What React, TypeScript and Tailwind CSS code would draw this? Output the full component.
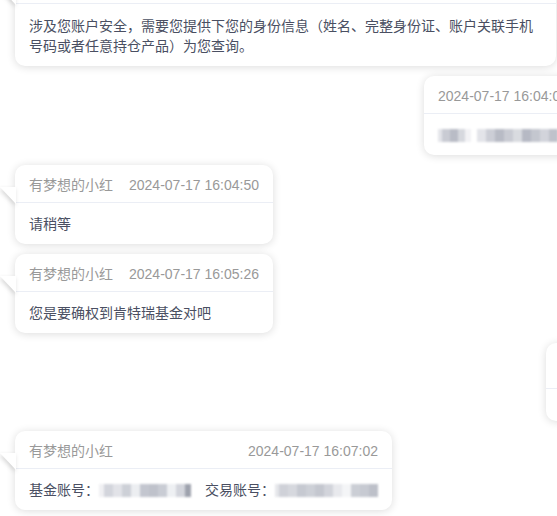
import React from "react";

const FONT = { fontFamily: '"Liberation Sans", "Noto Sans CJK SC", sans-serif' };

function Tail() {
  return (
    <svg
      className="absolute left-[-15px] top-[22px] z-10"
      width="16"
      height="17"
      viewBox="0 0 16 17"
      style={{ filter: "drop-shadow(-1px 2px 2px rgba(0,0,0,0.16))" }}
    >
      <polygon points="0,0 16,0 16,17" fill="#ffffff" />
    </svg>
  );
}

function Mosaic({ cells }: { cells: [number, string][] }) {
  return (
    <span className="inline-flex h-[13px] items-stretch align-middle blur-[0.8px]">
      {cells.map(([w, c], i) => (
        <span key={i} className="block h-full" style={{ width: w, backgroundColor: c }} />
      ))}
    </span>
  );
}

function Bubble({
  children,
  header,
  className,
  tail = true,
  headerClass = "h-[38px]",
}: {
  children: React.ReactNode;
  header?: React.ReactNode;
  className?: string;
  tail?: boolean;
  headerClass?: string;
}) {
  return (
    <div className={"relative shrink-0 rounded-[10px] bg-white shadow-[0_1px_8px_rgba(0,0,0,0.14)] " + (className ?? "")}>
      {tail && <Tail />}
      <div className={"flex items-center border-b border-[#ebeef5] px-[14px] pt-[3px] text-[14px] text-[#999999] " + headerClass}>
        {header}
      </div>
      {children}
    </div>
  );
}

export default function App() {
  return (
    <div className="relative h-[516px] w-[557px] overflow-hidden bg-white" style={FONT}>
      <div className="mt-[-34px] flex flex-col gap-[10px]">
        <Bubble className="ml-[15px] w-[541px]" header={<span>&nbsp;</span>}>
          <div className="px-[14px] pb-[10px] pt-[12px] text-[14px] leading-[20px] text-[#4a4f62]">
            涉及您账户安全，需要您提供下您的身份信息（姓名、完整身份证、账户关联手机号码或者任意持仓产品）为您查询。
          </div>
        </Bubble>

        <Bubble className="ml-[424px] w-[180px]" tail={false} header={<span className="whitespace-nowrap">2024-07-17 16:04:02</span>}>
          <div className="flex h-[41px] items-center px-[14px] pt-[1px]">
            <Mosaic
              cells={[
                [4, "#e4e5ea"],
                [8, "#c9cbd3"],
                [8, "#b9bcc6"],
                [7, "#d6d8de"],
                [6, "#f2f2f5"],
                [6, "#ffffff"],
                [9, "#e3e4e9"],
                [9, "#ccced6"],
                [9, "#b8bbc5"],
                [9, "#c9cbd3"],
                [9, "#d9dbe0"],
                [9, "#b6b9c4"],
                [9, "#c4c7cf"],
                [9, "#d2d4db"],
                [9, "#bfc2cb"],
              ]}
            />
          </div>
        </Bubble>

        <Bubble
          className="ml-[15px] w-[258px]"
          header={
            <>
              <span>有梦想的小红</span>
              <span className="ml-[16px] whitespace-nowrap">2024-07-17 16:04:50</span>
            </>
          }
        >
          <div className="flex h-[41px] items-center px-[14px] pt-[1px] text-[14px] text-[#4a4f62]">请稍等</div>
        </Bubble>

        <Bubble
          className="ml-[15px] w-[258px]"
          header={
            <>
              <span>有梦想的小红</span>
              <span className="ml-[16px] whitespace-nowrap">2024-07-17 16:05:26</span>
            </>
          }
        >
          <div className="flex h-[41px] items-center px-[14px] pt-[1px] text-[14px] text-[#4a4f62]">您是要确权到肯特瑞基金对吧</div>
        </Bubble>

        <Bubble className="ml-[546px] w-[150px]" tail={false} headerClass="h-[46px]" header={<span>&nbsp;</span>}>
          <div className="h-[32px]" />
        </Bubble>

        <Bubble
          className="ml-[15px] w-[377px]"
          header={
            <div className="flex w-full justify-between">
              <span>有梦想的小红</span>
              <span className="whitespace-nowrap">2024-07-17 16:07:02</span>
            </div>
          }
        >
          <div className="flex h-[41px] items-center px-[14px] pt-[1px] text-[14px] text-[#4a4f62]">
            <span>基金账号：</span>
            <Mosaic
              cells={[
                [5, "#f0f0f3"],
                [9, "#d3d5dc"],
                [9, "#e2e3e8"],
                [9, "#cdd0d7"],
                [9, "#eceef1"],
                [9, "#c3c6cf"],
                [9, "#bfc2cb"],
                [9, "#c9ccd4"],
                [9, "#eef0f3"],
                [9, "#d3d5dc"],
                [6, "#9ea2ad"],
              ]}
            />
            <span className="ml-[14px]">交易账号：</span>
            <Mosaic
              cells={[
                [4, "#e6e7eb"],
                [9, "#cfd1d8"],
                [9, "#d6d8de"],
                [9, "#c6c9d1"],
                [9, "#cdd0d7"],
                [9, "#c4c7cf"],
                [9, "#d2d4db"],
                [9, "#e8e9ed"],
                [9, "#f4f5f7"],
                [9, "#cbced5"],
                [9, "#c7cad2"],
                [9, "#bdc0c9"],
              ]}
            />
          </div>
        </Bubble>
      </div>
    </div>
  );
}
